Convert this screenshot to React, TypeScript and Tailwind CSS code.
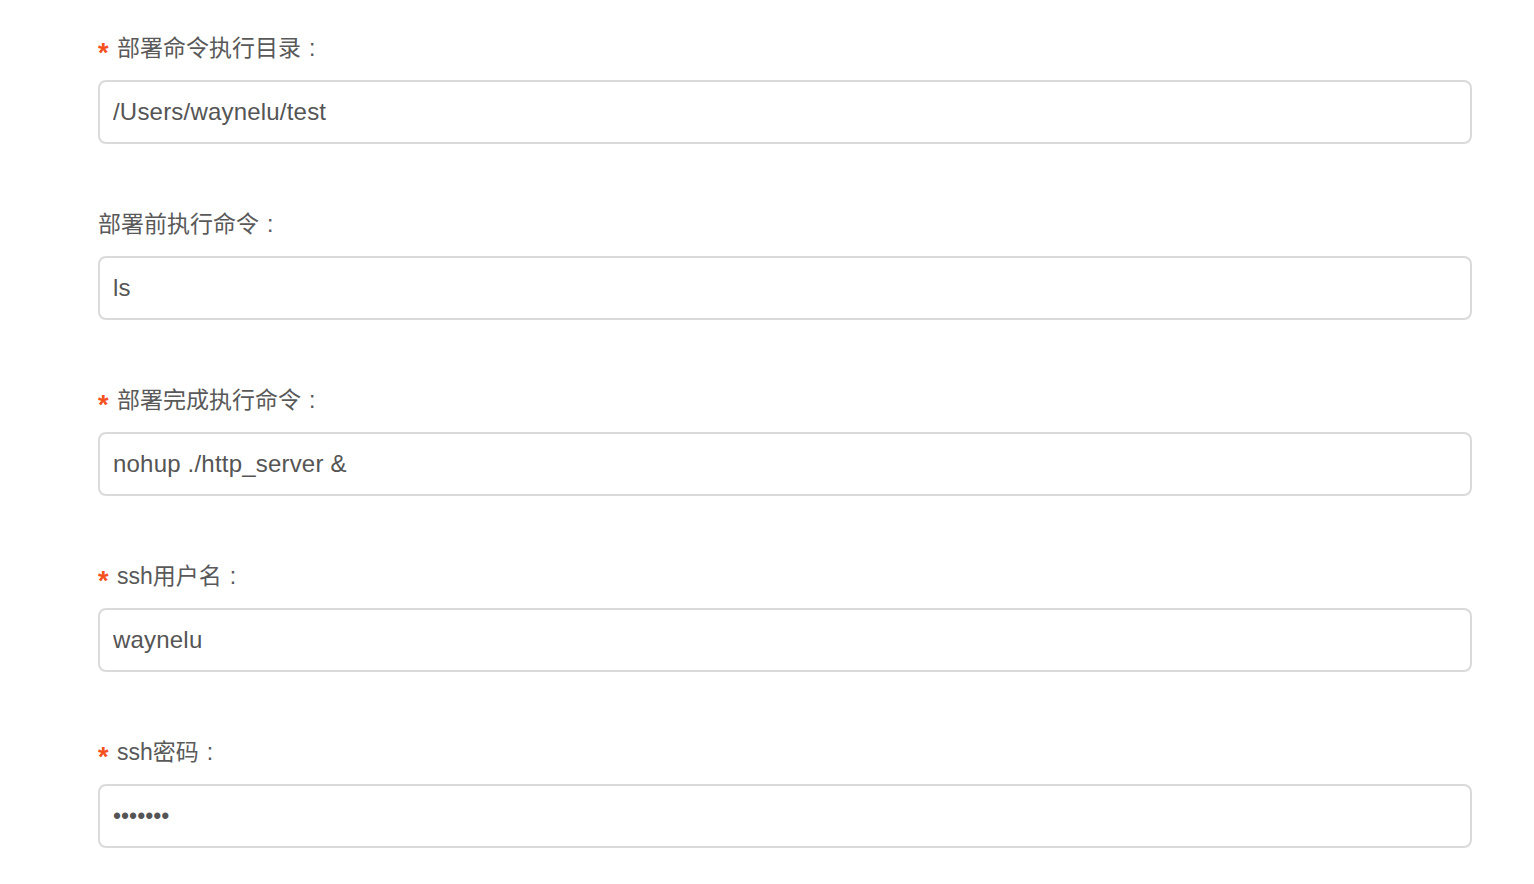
const fields = [
  { label: '部署命令执行目录', value: '/Users/waynelu/test', required: true },
  { label: '部署前执行命令', value: 'ls', required: false },
  { label: '部署完成执行命令', value: 'nohup ./http_server &', required: true },
  { label: 'ssh用户名', value: 'waynelu', required: true },
  { label: 'ssh密码', value: '•••••••', required: true, secret: true },
];

const App = () => {
  return (
    <div
      className="min-h-screen bg-white pl-[98px] pr-[62px] pt-[32px]"
      style={{ fontFamily: '"Liberation Sans", "Noto Sans CJK SC", sans-serif' }}
    >
      {fields.map((field, index) => (
        <div key={index} className="mb-[64px] flex flex-col">
          <label className="flex h-[32px] items-center text-[23px] text-[#595959]">
            {field.required && (
              <span className="mr-[7px] mt-[10px] w-[12px] text-[27px] font-bold leading-none text-[#f4511e]">*</span>
            )}
            <span>{field.label}</span>
            <span className="ml-[8px]">:</span>
          </label>
          <input
            type="text"
            readOnly
            defaultValue={field.value}
            className={
              'mt-[16px] h-[64px] w-full rounded-[8px] border-2 border-[#dadada] bg-white px-[13px] text-[#555] outline-none ' +
              (field.secret ? 'text-[23px]' : 'text-[24px] tracking-[0.2px]')
            }
          />
        </div>
      ))}
    </div>
  );
};

export default App;
